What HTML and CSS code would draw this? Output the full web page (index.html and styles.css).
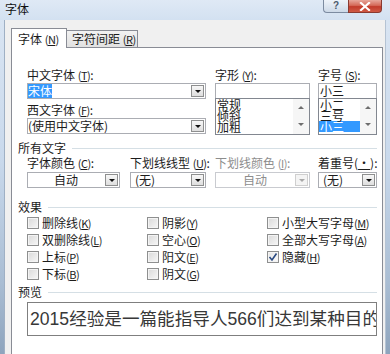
FILE: index.html
```html
<!DOCTYPE html>
<html>
<head>
<meta charset="utf-8">
<link rel="stylesheet" href="styles.css">
</head>
<body>
<div class="window">
  <div class="titlebar">
    <span class="title">字体</span>
    <div class="caption-btns">
      <div class="cbtn help">?</div>
      <div class="cbtn close">
        <svg width="12" height="9" viewBox="0 0 12 9"><path d="M2 1 L10 8 M10 1 L2 8" stroke="#fff" stroke-width="2.2" stroke-linecap="square"/></svg>
      </div>
    </div>
  </div>
  <div class="frame">
    <div class="client">
      <div class="tabs">
        <div class="tab active">字体 <span class="ak">(<u>N</u>)</span></div>
        <div class="tab">字符间距 <span class="ak">(<u>R</u>)</span></div>
      </div>
      <div class="panel">
        <div class="font-row">
          <div class="col-a">
            <div class="label">中文字体 <span class="ak">(<u>T</u>)</span>:</div>
            <div class="combo"><span class="ctext"><span class="sel">宋体</span></span><span class="dd"><i class="tri"></i></span></div>
            <div class="label second">西文字体 <span class="ak">(<u>F</u>)</span>:</div>
            <div class="combo"><span class="ctext">(使用中文字体)</span><span class="dd"><i class="tri"></i></span></div>
          </div>
          <div class="col-b">
            <div class="label">字形 <span class="ak">(<u>Y</u>)</span>:</div>
            <div class="input"></div>
            <div class="listbox">
              <div class="items">
                <div class="item">常规</div>
                <div class="item">倾斜</div>
                <div class="item">加粗</div>
              </div>
              <div class="vscroll"><i class="up"></i><i class="down"></i></div>
            </div>
          </div>
          <div class="col-c">
            <div class="label">字号 <span class="ak">(<u>S</u>)</span>:</div>
            <div class="input">小三</div>
            <div class="listbox">
              <div class="items">
                <div class="item">小二</div>
                <div class="item">三号</div>
                <div class="item selected">小三</div>
              </div>
              <div class="vscroll"><i class="up"></i><i class="down"></i></div>
            </div>
          </div>
        </div>

        <div class="group-title"><span>所有文字</span><i class="rule"></i></div>
        <div class="attr-row">
          <div class="attr w1">
            <div class="label">字体颜色 <span class="ak">(<u>C</u>)</span>:</div>
            <div class="combo"><span class="ctext center">自动</span><span class="dd"><i class="tri"></i></span></div>
          </div>
          <div class="attr w2">
            <div class="label">下划线线型 <span class="ak">(<u>U</u>)</span>:</div>
            <div class="combo"><span class="ctext pad">(无)</span><span class="dd"><i class="tri"></i></span></div>
          </div>
          <div class="attr w3 disabled">
            <div class="label">下划线颜色 <span class="ak">(<u>I</u>)</span>:</div>
            <div class="combo"><span class="ctext center">自动</span><span class="dd"><i class="tri"></i></span></div>
          </div>
          <div class="attr w4">
            <div class="label">着重号(<u>·</u>):</div>
            <div class="combo"><span class="ctext pad">(无)</span><span class="dd"><i class="tri"></i></span></div>
          </div>
        </div>

        <div class="group-title effects"><span>效果</span><i class="rule"></i></div>
        <div class="checks">
          <label class="chk"><i class="box"></i>删除线 <span class="ak">(<u>K</u>)</span></label>
          <label class="chk"><i class="box"></i>阴影 <span class="ak">(<u>Y</u>)</span></label>
          <label class="chk"><i class="box"></i>小型大写字母 <span class="ak">(<u>M</u>)</span></label>
          <label class="chk"><i class="box"></i>双删除线 <span class="ak">(<u>L</u>)</span></label>
          <label class="chk"><i class="box"></i>空心 <span class="ak">(<u>O</u>)</span></label>
          <label class="chk"><i class="box"></i>全部大写字母 <span class="ak">(<u>A</u>)</span></label>
          <label class="chk"><i class="box"></i>上标 <span class="ak">(<u>P</u>)</span></label>
          <label class="chk"><i class="box"></i>阳文 <span class="ak">(<u>E</u>)</span></label>
          <label class="chk"><i class="box checked"><svg width="10" height="10" viewBox="0 0 10 10"><path d="M1.5 5 L4 8 L8.5 1.5" fill="none" stroke="#2a4a82" stroke-width="1.6"/></svg></i>隐藏 <span class="ak">(<u>H</u>)</span></label>
          <label class="chk"><i class="box"></i>下标 <span class="ak">(<u>B</u>)</span></label>
          <label class="chk"><i class="box"></i>阴文 <span class="ak">(<u>G</u>)</span></label>
        </div>

        <div class="group-title preview-title"><span>预览</span><i class="rule"></i></div>
        <div class="preview">2015经验是一篇能指导人566们达到某种目的</div>
      </div>
    </div>
  </div>
</div>
</body>
</html>
```

FILE: styles.css
```css
* { box-sizing: border-box; }
html, body {
  margin: 0;
  width: 390px;
  height: 354px;
  overflow: hidden;
}
body {
  font-family: "Noto Sans CJK SC", "Noto Sans", sans-serif;
  font-size: 12px;
  color: #1c1c1c;
}
.window {
  height: 354px;
  display: flex;
  flex-direction: column;
  background: linear-gradient(to bottom, #dbe6f3 0%, #c9d9ec 45%, #a9bdd3 80%, #8ea4bd 100%);
}
.titlebar {
  height: 20px;
  flex-shrink: 0;
  display: flex;
  align-items: flex-start;
  background: linear-gradient(to bottom, #dfe9f5, #d3e1f1);
}
.title {
  padding-left: 5px;
  line-height: 18px;
  font-size: 12px;
  color: #111;
}
.caption-btns {
  margin-left: auto;
  margin-right: 8px;
  display: flex;
}
.cbtn {
  height: 13px;
  display: flex;
  align-items: center;
  justify-content: center;
}
.help {
  width: 25px;
  border: 1px solid #7c8ba0;
  border-top: none;
  border-right: none;
  border-radius: 0 0 0 4px;
  background: linear-gradient(to bottom, #eef3f9, #cdd9e7);
  color: #4c5a6c;
  font-family: "Liberation Sans", sans-serif;
  font-size: 10px;
  font-weight: bold;
  line-height: 12px;
}
.close {
  width: 34px;
  border: 1px solid #8a3a30;
  border-top: none;
  border-radius: 0 0 4px 0;
  background: linear-gradient(to bottom, #e7a79b 0%, #d56a59 45%, #c23b2b 55%, #cf5a45 100%);
}
.frame {
  flex: 1;
  display: flex;
  padding: 0 4px 0 4px;
  min-height: 0;
}
.client {
  flex: 1;
  background: #f0f0f0;
  border-left: 1px solid #9fb0c4;
  border-right: 1px solid #b5c3d3;
  padding: 8px 2px 0 6px;
  overflow: hidden;
  display: flex;
  flex-direction: column;
}
.tabs {
  display: flex;
  align-items: flex-end;
  height: 19px;
  flex-shrink: 0;
}
.tab {
  height: 17px;
  padding: 0 6px;
  border: 1px solid #898c95;
  border-bottom: none;
  background: linear-gradient(to bottom, #f2f2f2, #e1e1e1);
  line-height: 15px;
  font-size: 12px;
  white-space: nowrap;
  margin-bottom: 0;
}
.tab.active {
  width: 56px;
  height: 20px;
  padding-left: 6px;
  background: #fff;
  margin-bottom: -1px;
  position: relative;
  z-index: 1;
  line-height: 20px;
}
.tab:not(.active) {
  width: 71px;
  border-left: none;
  padding-left: 5px;
}
.ak {
  font-size: 11px;
  letter-spacing: -0.5px;
}
.panel {
  flex-shrink: 0;
  height: 330px;
  border: 1px solid #898c95;
  background: #fff;
  padding: 20px 5px 0 15px;
}
.label {
  height: 14px;
  line-height: 14px;
  margin-bottom: 1px;
  white-space: nowrap;
}
.label.second { margin-top: 4px; }
.font-row { display: flex; }
.col-a { width: 179px; }
.col-b { width: 95px; margin-left: 9px; }
.col-c { width: 59px; margin-left: 8px; }
.combo {
  height: 16px;
  border: 1px solid #abadb3;
  background: #fff;
  display: flex;
  align-items: stretch;
}
.ctext {
  flex: 1;
  line-height: 14px;
  white-space: nowrap;
  overflow: hidden;
}
.ctext.center { text-align: center; }
.ctext.pad { padding-left: 4px; }
.sel {
  display: inline-block;
  background: #3399ff;
  color: #fff;
  height: 14px;
}
.dd {
  width: 13px;
  margin: 1px;
  border: 1px solid #8e8f8f;
  background: linear-gradient(to bottom, #f7f7f7, #dedede);
  display: flex;
  align-items: center;
  justify-content: center;
}
.tri {
  width: 0;
  height: 0;
  border-left: 3px solid transparent;
  border-right: 3px solid transparent;
  border-top: 3px solid #111;
}
.disabled { color: #8d8d8d; }
.disabled .combo { border-color: #c9cbd0; }
.disabled .dd { border-color: #cfcfcf; background: #f4f4f4; }
.disabled .tri { border-top-color: #a8a8a8; }
.input {
  height: 16px;
  border: 1px solid #abadb3;
  line-height: 14px;
  padding-left: 1px;
  background: #fff;
}
.listbox {
  height: 37px;
  margin-top: -1px;
  border: 1px solid #828790;
  display: flex;
  background: #fff;
}
.items {
  flex: 1;
  padding-top: 0;
  overflow: hidden;
}
.item {
  height: 11px;
  line-height: 11px;
  padding-left: 1px;
  white-space: nowrap;
}
.item.selected {
  background: #3399ff;
  color: #fff;
}
.vscroll {
  width: 16px;
  background: #f6f6f6;
  display: flex;
  flex-direction: column;
  align-items: center;
  justify-content: space-between;
  padding: 7px 0 8px;
}
.vscroll .up, .vscroll .down {
  width: 0;
  height: 0;
  border-left: 3px solid transparent;
  border-right: 3px solid transparent;
}
.vscroll .up { border-bottom: 3px solid #6e6e6e; }
.vscroll .down { border-top: 3px solid #6e6e6e; }
.group-title {
  margin-left: -9px;
  margin-top: 6px;
  height: 14px;
  line-height: 14px;
  display: flex;
  align-items: center;
}
.group-title .rule {
  flex: 1;
  border-top: 1px solid #d5dfe5;
  margin-left: 6px;
}
.group-title.effects { margin-top: 12px; }
.group-title.preview-title { margin-top: 3px; }
.attr-row {
  display: flex;
  margin-top: 1px;
}
.attr .label { margin-bottom: 2px; }
.w1 { width: 93px; }
.w2 { width: 76px; margin-left: 10px; }
.w3 { width: 95px; margin-left: 9px; }
.w4 { width: 59px; margin-left: 8px; }
.checks {
  display: grid;
  grid-template-columns: 120px 120px 110px;
  grid-auto-rows: 17px;
}
.chk {
  display: flex;
  align-items: center;
  white-space: nowrap;
}
.box {
  width: 12px;
  height: 12px;
  border: 1px solid #8e8f8f;
  background: linear-gradient(135deg, #d9d9d9, #f7f7f7);
  box-shadow: inset 0 0 0 1px #f4f4f4;
  margin-right: 3px;
  display: flex;
  align-items: center;
  justify-content: center;
}
.box.checked { background: linear-gradient(135deg, #e6e6e6, #fbfbfb); }
.preview {
  margin-top: 3px;
  width: 350px;
  height: 34px;
  border: 1px solid #7f7f7f;
  padding-left: 2px;
  font-family: "Liberation Sans", "Noto Sans CJK SC", sans-serif;
  font-size: 17.6px;
  line-height: 32px;
  color: #383838;
  white-space: nowrap;
  overflow: hidden;
}
```
